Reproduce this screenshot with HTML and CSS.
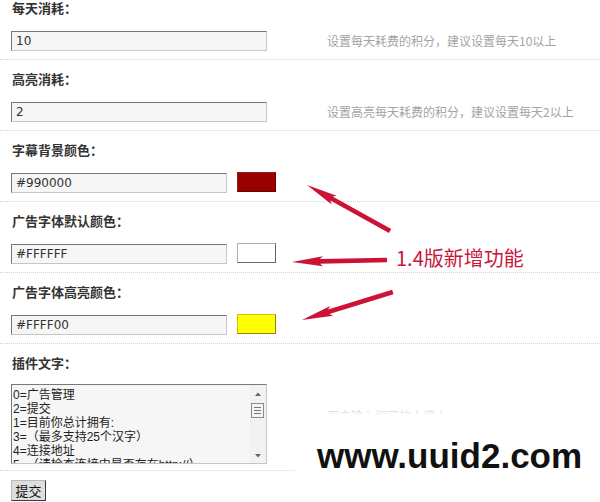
FILE: index.html
```html
<!DOCTYPE html>
<html lang="zh-CN">
<head>
<meta charset="utf-8">
<title>广告管理设置</title>
<link rel="stylesheet" href="styles.css">
</head>
<body>
<div class="page">
  <form class="form">
    <div class="field">
      <div class="label">每天消耗：</div>
      <div class="control">
        <input class="text wide" type="text" value="10">
        <span class="hint">设置每天耗费的积分，建议设置每天10以上</span>
      </div>
    </div>
    <div class="field">
      <div class="label">高亮消耗：</div>
      <div class="control">
        <input class="text wide" type="text" value="2">
        <span class="hint">设置高亮每天耗费的积分，建议设置每天2以上</span>
      </div>
    </div>
    <div class="field">
      <div class="label">字幕背景颜色：</div>
      <div class="control">
        <input class="text narrow" type="text" value="#990000">
        <span class="swatch swatch-red"></span>
      </div>
    </div>
    <div class="field">
      <div class="label">广告字体默认颜色：</div>
      <div class="control">
        <input class="text narrow" type="text" value="#FFFFFF">
        <span class="swatch swatch-white"></span>
      </div>
    </div>
    <div class="field">
      <div class="label">广告字体高亮颜色：</div>
      <div class="control">
        <input class="text narrow" type="text" value="#FFFF00">
        <span class="swatch swatch-yellow"></span>
      </div>
    </div>
    <div class="field last">
      <div class="label">插件文字：</div>
      <div class="control area">
        <div class="ta-wrap">
          <textarea class="textarea">0=广告管理
2=提交
1=目前你总计拥有:
3=（最多支持25个汉字）
4=连接地址
5=（请检查连接中是否存在http://）</textarea>
          <svg class="scrollbar" width="16" height="78" viewBox="0 0 16 78">
            <rect x="0" y="0" width="16" height="78" fill="#f2f2f2"/>
            <polygon points="5,11 8,7.5 11,11" fill="#666"/>
            <rect x="1.5" y="18.5" width="12" height="14" fill="#f4f4f4" stroke="#8a8a8a"/>
            <line x1="4" y1="22.5" x2="11" y2="22.5" stroke="#777"/>
            <line x1="4" y1="25.5" x2="11" y2="25.5" stroke="#777"/>
            <line x1="4" y1="28.5" x2="11" y2="28.5" stroke="#777"/>
            <polygon points="5,69 11,69 8,72.5" fill="#666"/>
          </svg>
        </div>
        <span class="hint hint-area">双击输入框可放大缩小</span>
      </div>
    </div>
    <div class="actions">
      <button class="submit" type="button">提交</button>
    </div>
  </form>

  <svg class="arrows" width="600" height="502" viewBox="0 0 600 502">
    <g fill="#cc1237">
      <g transform="translate(307 185) rotate(29)">
        <polygon points="0,0 31,-5 28,-2.3 95,-2.3 95,2.3 28,2.3 31,5"/>
      </g>
      <g transform="translate(292 262) rotate(-1.2)">
        <polygon points="0,0 31,-5 28,-2.3 95,-2.3 95,2.3 28,2.3 31,5"/>
      </g>
      <g transform="translate(302 320) rotate(-17.1)">
        <polygon points="0,0 31,-5 28,-2.3 95,-2.3 95,2.3 28,2.3 31,5"/>
      </g>
    </g>
  </svg>
  <div class="callout">1.4版新增功能</div>
  <div class="watermark">www.uuid2.com</div>
</div>
</body>
</html>
```
FILE: styles.css
```css
html, body {
  margin: 0;
  padding: 0;
  background: #fff;
}

body {
  font-family: "Noto Sans CJK SC", "Noto Sans", sans-serif;
  color: #333;
}

.page {
  position: relative;
  width: 600px;
  height: 502px;
  overflow: hidden;
}

.form {
  margin: -11px 0 0 0;
}

.field {
  padding: 11px 0 8px 11px;
  border-bottom: 1px dotted #d4d4d4;
}

.label {
  height: 16px;
  padding-left: 1px;
  font-size: 13px;
  line-height: 16px;
  font-weight: bold;
  color: #333;
}

.control {
  display: flex;
  align-items: center;
  height: 20px;
  margin-top: 15px;
}

.text {
  box-sizing: border-box;
  height: 20px;
  margin: 0;
  padding: 0 4px;
  border: 1px solid;
  border-color: #787878 #c6c6c6 #c6c6c6 #787878;
  background: #f6f6f6;
  font-family: "DejaVu Sans", sans-serif;
  font-size: 12px;
  color: #333;
  outline: none;
}

.wide {
  width: 256px;
}

.narrow {
  width: 216px;
}

.hint {
  margin-left: 60px;
  font-size: 12px;
  line-height: 16px;
  color: #a4a4a4;
  white-space: nowrap;
}

.swatch {
  box-sizing: border-box;
  width: 39px;
  height: 20px;
  margin-left: 10px;
  align-self: flex-start;
  margin-top: -1px;
  border: 1px solid;
}

.swatch-red {
  background: #990000;
  border-color: #8c2020 #6a0000 #6a0000 #8c2020;
}

.swatch-white {
  background: #fff;
  border-color: #b0b0b0 #666 #666 #b0b0b0;
}

.swatch-yellow {
  background: #ffff00;
  border-color: #c8c800 #8a8a20 #8a8a20 #c8c800;
}

.field.last {
  padding-bottom: 6px;
}

.control.area {
  height: auto;
  align-items: flex-start;
  margin-top: 13px;
}

.ta-wrap {
  position: relative;
  width: 256px;
  height: 80px;
}

.textarea {
  display: block;
  box-sizing: border-box;
  width: 256px;
  height: 80px;
  margin: 0;
  padding: 3px 18px 0 1px;
  border: 1px solid;
  border-color: #787878 #c6c6c6 #c6c6c6 #787878;
  background: #f6f6f6;
  font-family: "Liberation Sans", "Noto Sans CJK SC", sans-serif;
  font-size: 12px;
  line-height: 14px;
  color: #222;
  resize: none;
  overflow: hidden;
  white-space: pre;
  outline: none;
}

.scrollbar {
  position: absolute;
  top: 1px;
  right: 1px;
  display: block;
}

.hint-area {
  margin-top: 24px;
}

.actions {
  display: flex;
  padding: 9px 0 0 11px;
}

.submit {
  box-sizing: border-box;
  width: 35px;
  height: 21px;
  margin: 0;
  padding: 0;
  border: 1px solid;
  border-color: #b8b8b8 #3a3a3a #3a3a3a #b8b8b8;
  background: #dedede;
  font-family: "Noto Sans CJK SC", sans-serif;
  font-size: 13px;
  line-height: 18px;
  color: #111;
}

.arrows {
  position: absolute;
  left: 0;
  top: 0;
  pointer-events: none;
}

.callout {
  position: absolute;
  left: 396px;
  top: 246px;
  font-family: "Noto Sans CJK SC", sans-serif;
  font-size: 20px;
  line-height: 24px;
  color: #c8163c;
  white-space: nowrap;
}

.watermark {
  position: absolute;
  left: 300px;
  top: 414px;
  width: 300px;
  height: 68px;
  box-sizing: border-box;
  padding: 22px 0 0 17px;
  background: #fff;
  box-shadow: 0 0 8px 4px #fff;
  font-family: "Liberation Sans", sans-serif;
  font-size: 35px;
  line-height: 40px;
  font-weight: bold;
  color: #111;
  white-space: nowrap;
}
```
